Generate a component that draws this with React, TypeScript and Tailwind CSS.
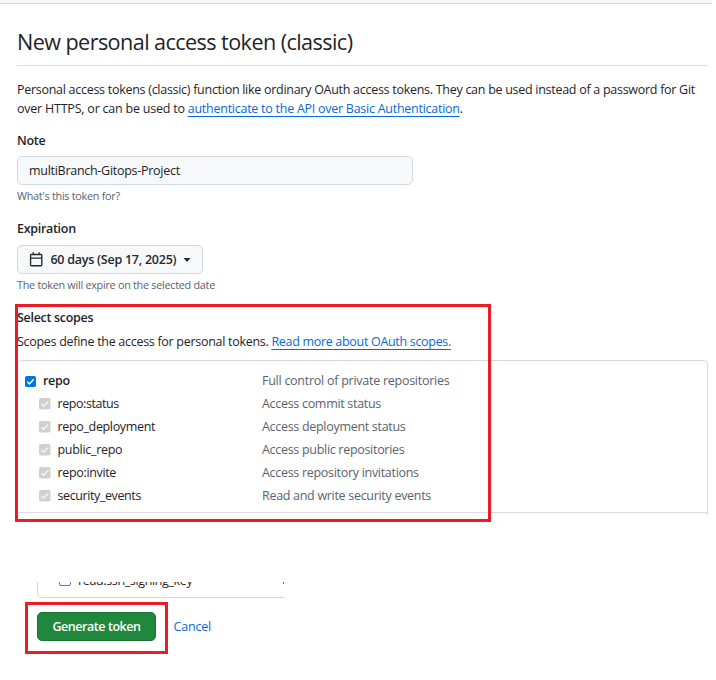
import type { ReactNode } from "react";

function Check({ disabled = false }: { disabled?: boolean }) {
  return (
    <svg
      viewBox="0 0 12 12"
      className={disabled ? "mt-px size-[11.5px] shrink-0 text-[#d0d0d0]" : "mt-px size-[11px] shrink-0 text-[#0078d7]"}
    >
      <rect width="12" height="12" rx="1.8" fill="currentColor" />
      <path d="M2.5 6.3 4.8 8.6 9.6 3.6" fill="none" stroke={disabled ? "#f4f4f4" : "#fff"} strokeWidth="1.6" />
    </svg>
  );
}

function Calendar() {
  return (
    <svg viewBox="0 0 16 16" className="size-[14.4px] shrink-0" fill="#25292e">
      <path d="M4.75 0a.75.75 0 0 1 .75.75V2h5V.75a.75.75 0 0 1 1.5 0V2h1.25c.966 0 1.75.784 1.75 1.75v10.5A1.75 1.75 0 0 1 13.25 16H2.75A1.75 1.75 0 0 1 1 14.25V3.75C1 2.784 1.784 2 2.75 2H4V.75A.75.75 0 0 1 4.75 0ZM2.5 7.5v6.75c0 .138.112.25.25.25h10.5a.25.25 0 0 0 .25-.25V7.5Zm10.75-4H2.75a.25.25 0 0 0-.25.25V6h11V3.75a.25.25 0 0 0-.25-.25Z" />
    </svg>
  );
}

function Label({ children, className = "" }: { children: ReactNode; className?: string }) {
  return <div className={`h-[19px] font-semibold leading-[19px] tracking-[-0.3px] ${className}`}>{children}</div>;
}

const scopes = [
  { name: "repo:status", text: "Access commit status", spacing: "tracking-[-0.44px]" },
  { name: "repo_deployment", text: "Access deployment status", spacing: "tracking-[-0.34px]" },
  { name: "public_repo", text: "Access public repositories", spacing: "tracking-[-0.3px]" },
  { name: "repo:invite", text: "Access repository invitations", spacing: "tracking-[-0.34px]" },
  { name: "security_events", text: "Read and write security events", spacing: "tracking-[-0.4px]" },
];

export default function App() {
  return (
    <div className="relative flex h-[680px] w-[716px] flex-col overflow-hidden bg-white font-['Open_Sans','Noto_Sans',sans-serif] text-[12.5px] text-[#1f2328]">
      <div className="h-1 w-[712px] shrink-0 border-b border-[#d1d9e0] bg-[#f6f8fa]" />

      <main className="flex flex-col pl-[17px]">
        <h1 className="h-[62px] w-[691px] border-b border-[#dadee2] pt-[23px] text-[21.6px] leading-[30px] tracking-[-0.57px]">
          New personal access token (classic)
        </h1>

        <p className="mt-[14px] whitespace-nowrap leading-[19px]">
          <span className="tracking-[-0.28px]">
            Personal access tokens (classic) function like ordinary OAuth access tokens. They can be used instead of a
            password for Git
          </span>
          <br />
          <span className="tracking-[-0.22px]">over HTTPS, or can be used to </span>
          <a className="tracking-[-0.26px] text-[#0969da] underline decoration-1 underline-offset-[3px]">
            authenticate to the API over Basic Authentication
          </a>
          .
        </p>

        <Label className="mt-[13px]">Note</Label>
        <div className="mt-[6px] flex h-[29px] w-[396px] items-center rounded-[5px] border border-[#d1d9e0] bg-[#f6f8fa] pl-[11px] pt-px tracking-[-0.28px]">
          multiBranch-Gitops-Project
        </div>
        <div className="mt-[3px] h-4 text-[10.8px] leading-4 tracking-[-0.26px] text-[#59636e]">
          What's this token for?
        </div>

        <Label className="mt-[15px]">Expiration</Label>
        <button className="mt-[7px] flex h-[29px] w-[186px] items-center rounded-[5px] border border-[#d1d9e0] bg-[#f6f8fa] pl-[11px] font-semibold text-[#25292e]">
          <Calendar />
          <span className="ml-[7px] whitespace-nowrap leading-[19px] tracking-[-0.24px]">60 days (Sep 17, 2025)</span>
          <svg viewBox="0 0 8 4" className="ml-[7px] h-1 w-2" fill="#25292e">
            <path d="M0.6 0h6.8L4 4z" />
          </svg>
        </button>
        <div className="mt-[3px] h-4 text-[10.8px] leading-4 tracking-[-0.26px] text-[#59636e]">
          The token will expire on the selected date
        </div>

        <Label className="mt-[15px]">Select scopes</Label>
        <p className="mt-[5px] h-[19px] whitespace-nowrap leading-[19px]">
          <span className="tracking-[-0.29px]">Scopes define the access for personal tokens. </span>
          <a className="tracking-[-0.31px] text-[#0969da] underline decoration-1 underline-offset-[3px]">
            Read more about OAuth scopes.
          </a>
        </p>

        <section className="mt-[9px] flex h-[155px] w-[691px] flex-col rounded-t-[5px] border border-b-0 border-[#d1d9e0]">
          <div className="flex h-[152px] flex-col border-b border-[#d8dee4] pt-[8px]">
            <div className="flex h-[23px] items-center pl-[7px]">
              <Check />
              <span className="ml-[7px] w-[219px] font-semibold leading-[19px] tracking-[-0.3px]">repo</span>
              <span className="leading-[19px] tracking-[-0.26px] text-[#59636e]">Full control of private repositories</span>
            </div>
            {scopes.map((s) => (
              <div key={s.name} className="flex h-[23px] items-center pl-[21px]">
                <Check disabled />
                <span className={`ml-[7px] w-[204.5px] leading-[19px] ${s.spacing}`}>{s.name}</span>
                <span className="leading-[19px] tracking-[-0.3px] text-[#59636e]">{s.text}</span>
              </div>
            ))}
          </div>
        </section>
      </main>

      <footer className="mt-[67px] flex flex-col pl-[37px]">
        <div className="flex h-4 w-[248px] items-end overflow-hidden rounded-bl-[5px] border-b border-l border-[#d1d9e0] pb-[7px]">
          <span className="mb-[4px] ml-[21px] size-3 shrink-0 rounded-[2px] border border-[#767676] bg-white" />
          <span className="ml-[7px] h-[19px] w-[205px] shrink-0 leading-[19px] tracking-[-0.36px]">
            read:ssh_signing_key
          </span>
          <span className="mb-[6px] h-3 w-px bg-[#59636e]" />
        </div>
        <div className="mt-[14px] flex h-[29px] items-center">
          <button className="h-[29px] w-[119px] rounded-[5px] border border-[#1a7534] bg-[#1f883d] pt-px font-semibold tracking-[-0.45px] text-white">
            Generate token
          </button>
          <a className="ml-[17.5px] font-medium leading-[19px] tracking-[-0.2px] text-[#0969da]">Cancel</a>
        </div>
      </footer>

      <div className="pointer-events-none absolute left-[15px] top-[304px] h-[218px] w-[476px] border-[3px] border-[#ed1c24]" />
      <div className="pointer-events-none absolute left-[25px] top-[602px] h-[52px] w-[143px] border-[3px] border-[#ed1c24]" />
    </div>
  );
}
